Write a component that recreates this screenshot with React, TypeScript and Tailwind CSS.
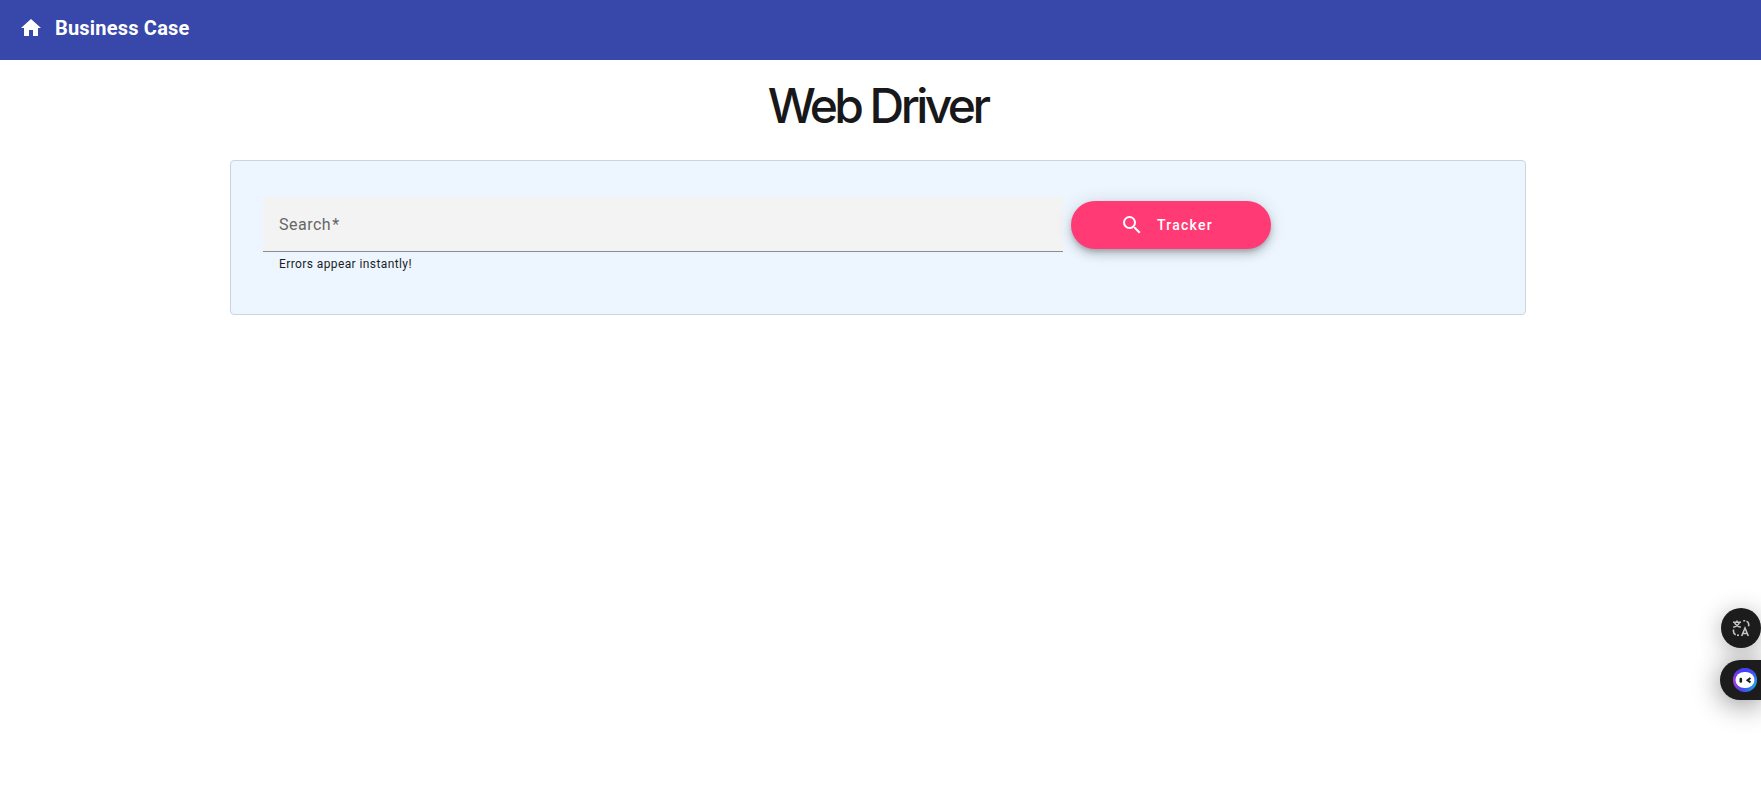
function Header() {
  return (
    <header className="flex h-[60px] items-start bg-[#3847aa] pl-[19px] text-white">
      <svg viewBox="0 0 24 24" className="mt-4 size-6 fill-current">
        <path d="M10 20v-6h4v6h5v-8h3L12 3 2 12h3v8z" />
      </svg>
      <span className="mt-3 ml-3 text-[20px] leading-8 font-bold tracking-[0.2px] whitespace-nowrap">Business Case</span>
    </header>
  );
}

function SearchCard() {
  return (
    <section className="mt-[26px] ml-[230px] flex h-[155px] w-[1296px] gap-2 rounded border border-[#cbd5e1] bg-[#edf6ff] pt-[35px] pl-8">
      <div className="w-[800px]">
        <div className="flex h-14 items-center rounded-t border-b border-[#8c8c8c] bg-[#f3f3f3] px-4 pt-[2px] text-[16px] tracking-[0.5px] text-[#666666]">
          <span>Search</span>
          <span className="ml-px">*</span>
        </div>
        <p className="px-4 pt-[2px] text-[12px] leading-5 tracking-[0.4px] text-[#1b1e24]">Errors appear instantly!</p>
      </div>
      <button className="mt-[5px] flex h-12 w-[200px] items-center rounded-full bg-[#ff3a75] pl-[49px] text-white shadow-[0px_3px_5px_-1px_rgba(0,0,0,0.2),0px_6px_10px_0px_rgba(0,0,0,0.14),0px_1px_18px_0px_rgba(0,0,0,0.12)]">
        <svg viewBox="0 0 24 24" className="size-6 fill-current">
          <path d="M15.5 14h-.79l-.28-.27A6.471 6.471 0 0 0 16 9.5 6.5 6.5 0 1 0 9.5 16c1.61 0 3.09-.59 4.23-1.57l.27.28v.79l5 4.99L20.49 19l-4.99-5zm-6 0C7.01 14 5 11.99 5 9.5S7.01 5 9.5 5 14 7.01 14 9.5 11.99 14 9.5 14z" />
        </svg>
        <span className="ml-[13px] text-[14px] font-medium tracking-[1.25px]">Tracker</span>
      </button>
    </section>
  );
}

function FloatingTools() {
  return (
    <aside className="absolute top-[608px] right-0 flex flex-col items-end gap-3">
      <button className="flex size-10 items-center justify-center rounded-full bg-[#1c1c1c] shadow-[0_4px_24px_rgba(0,0,0,0.3)]">
        <svg viewBox="0 0 18 18" className="size-[18px] fill-none stroke-[#c4c4c8] stroke-[1.6]">
          <path d="M1 3.200h8M5 1.500v1.500M2.500 3.500C3.500 6 5.500 7.500 8.800 8.300M7.500 3.500C6.500 6 4.500 7.500 1.200 8.300" />
          <path d="M9.700 17 13 9 16.300 17M10.800 14.500h4.400" />
          <path d="M11.200 1.800h2M14.500 2.200c1.500.5 2.200 1.500 2.200 3v2" />
          <path d="M1.500 10.500v2c0 1.500.7 2.500 2.200 3.200M5 16.200h2" />
        </svg>
      </button>
      <button className="flex h-10 w-[41px] items-center justify-end rounded-l-full bg-[#1c1c1c] pr-1 shadow-[0_4px_28px_rgba(0,0,0,0.45)]">
        <svg viewBox="0 0 24 24" className="size-6">
          <defs>
            <linearGradient id="ring" x1="0" y1="0.65" x2="1" y2="0.8">
              <stop offset="0" stopColor="#b03ddd" />
              <stop offset="0.35" stopColor="#5043ef" />
              <stop offset="0.7" stopColor="#2678e8" />
              <stop offset="1" stopColor="#20b5dc" />
            </linearGradient>
            <linearGradient id="ringTop" x1="0" y1="0" x2="0" y2="1">
              <stop offset="0" stopColor="#483cfa" />
              <stop offset="0.65" stopColor="#483cfa" stopOpacity="0" />
            </linearGradient>
          </defs>
          <circle cx="12" cy="12" r="12" fill="url(#ring)" />
          <circle cx="12" cy="12" r="12" fill="url(#ringTop)" />
          <rect x="2.500" y="4" width="19" height="16" rx="9" ry="8" fill="#fff" />
          <rect x="6.500" y="9.800" width="2.600" height="5" rx="1.200" fill="#1c1c1c" />
          <path d="m17.500 10-3 2.200 3 2.200" fill="none" stroke="#1c1c1c" strokeWidth="2" />
        </svg>
      </button>
    </aside>
  );
}

export default function App() {
  return (
    <div className="relative h-[799px] w-[1761px] overflow-hidden bg-white font-['Roboto',sans-serif]">
      <Header />
      <main>
        <h1 className="mt-[18px] pr-[6px] text-center font-['Inter',sans-serif] text-[48px] leading-[56px] font-medium tracking-[-3.6px] text-[#18181a]">
          Web Driver
        </h1>
        <SearchCard />
      </main>
      <FloatingTools />
    </div>
  );
}
